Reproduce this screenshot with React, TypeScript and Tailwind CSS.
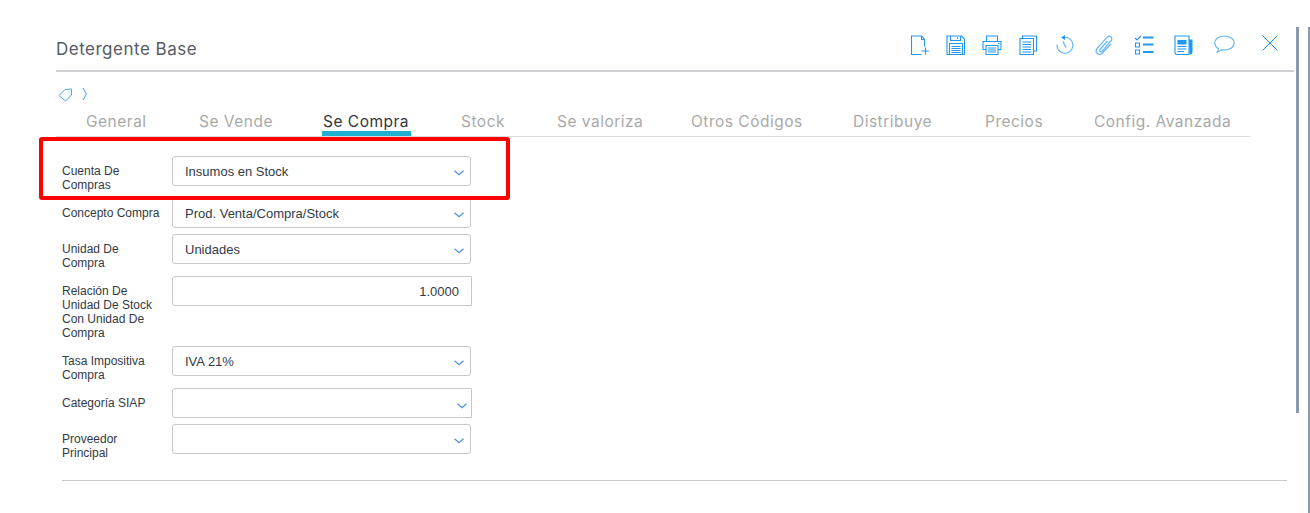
const B = "#2196f3";

function Chevron({ shift = false }: { shift?: boolean }) {
  return (
    <svg width="10" height="6" viewBox="0 0 10 6" className={shift ? "absolute right-[4px] top-[14px]" : "absolute right-[6px] top-[13px]"}>
      <path d="M0.5 0.8 L5 4.8 L9.5 0.8" fill="none" stroke="#4a90d9" strokeWidth="1.2" />
    </svg>
  );
}

function Field({ label, value, kind = "select" }: { label: string; value?: string; kind?: "select" | "input" | "wide" }) {
  return (
    <div className="flex items-start">
      <div className="w-[110px] pt-2 pr-2 text-[12px] leading-[14px] text-[#333a45]">{label}</div>
      {kind === "input" ? (
        <div className="h-[30px] w-[300px] border border-[#c8c8cc] rounded-l-[3px] px-3 text-right text-[13px] leading-[30px] text-[#333a45]">{value}</div>
      ) : (
        <div className={`relative h-[30px] border border-[#c8c8cc] text-[13px] leading-[30px] pl-3 text-[#333a45] ${kind === "wide" ? "w-[300px] rounded-l-[3px]" : "w-[299px] rounded-[3px]"}`}>
          {value}
          <Chevron shift={kind === "wide"} />
        </div>
      )}
    </div>
  );
}

const common = { width: 20, height: 20, viewBox: "0 0 20 20", fill: "none", stroke: B, strokeWidth: 1.1 };

function NewDoc() {
  return (
    <svg {...common}>
      <path d="M11.5 19.5H1.5V1H11.5L14.5 4.5V11.5" />
      <path d="M11.5 1V4.5H14.5" />
      <path d="M11.5 16H19M15.5 12.5V19.5" />
    </svg>
  );
}
function Save() {
  return (
    <svg {...common}>
      <path d="M1 1H15.5L18.5 4V19.5H1Z" />
      <path d="M4.5 1V5.5H14.5V1M11.5 2.5V4" />
      <path d="M3.5 8.5H16.5V19.5H3.5Z" />
      <path d="M5.5 11.5H14.5M5.5 13.5H14.5M5.5 15.5H14.5M5.5 17.5H14.5" />
    </svg>
  );
}
function Printer() {
  return (
    <svg {...common}>
      <path d="M4.5 6V1H15.5V6" />
      <path d="M4 14.5H1V6.5H19V14.5H16" />
      <path d="M4 10.5H16V19.5H4Z" />
      <path d="M6 13H14M6 15H14M6 17H14" />
      <path d="M16 8.5H17.5" />
    </svg>
  );
}
function Copies() {
  return (
    <svg {...common}>
      <path d="M4.5 3V1H18.5V16H15.5" />
      <path d="M2 3.5H15.5V19.5H2Z" />
      <path d="M4.5 7H13M4.5 9.5H13M4.5 12H13M4.5 14.5H13M4.5 17H13" />
    </svg>
  );
}
function History() {
  return (
    <svg {...common} stroke="#64b5f6" strokeWidth={1.2}>
      <path d="M9 2.3A8 8 0 1 1 2 9.5" />
      <path d="M8 6.5L11 12.5" />
      <path d="M10 0V5L6 2.5Z" fill={B} stroke="none" />
    </svg>
  );
}
function Clip() {
  return (
    <svg {...common} stroke="#64b5f6" strokeWidth={1.2}>
      <path d="M13.5 6L6 14.5C4.8 16 6.8 17.6 8 16.3L16.8 6C19.5 2.8 15.8 -0.5 13 2.3L3.5 12.8C-0.2 17 4.6 21.5 8.3 18L17 9" />
    </svg>
  );
}
function Checklist() {
  return (
    <svg {...common}>
      <path d="M1 3L3 5L7 1" />
      <path d="M1.5 8H5.5V12H1.5ZM1.5 15H5.5V19H1.5Z" />
      <path d="M9 1.5H19.5V3.5H9ZM9 8.5H19.5V10.5H9ZM9 16H19.5V18H9Z" fill={B} stroke="none" />
    </svg>
  );
}
function News() {
  return (
    <svg {...common}>
      <path d="M15 4.5H18.5V17C18.5 18.5 17.5 19.5 15.5 19.5Z" fill={B} stroke="none" />
      <path d="M1 1H15V19.5H3C1.8 19.5 1 18.7 1 17.5Z" />
      <path d="M3.5 5H12.5V9.5H3.5Z" fill={B} stroke="none" />
      <path d="M3.5 11.5H12.5M3.5 14H12.5M3.5 16.5H10" />
    </svg>
  );
}
function Bubble() {
  return (
    <svg {...common} stroke="#64b5f6" strokeWidth={1.2} width={21} viewBox="0 0 21 20">
      <path d="M10.5 1C5 1 0.8 4 0.8 8C0.8 10.3 2.2 12.3 4.4 13.6C4.4 15 4 16.2 3.2 17C5 16.7 6.7 15.7 7.7 14.7C8.6 14.9 9.5 15 10.5 15C16 15 20.2 12 20.2 8C20.2 4 16 1 10.5 1Z" />
    </svg>
  );
}

function Tag() {
  return (
    <svg width="15" height="14" viewBox="0 0 15 14" fill="none" stroke="#42a5f5" strokeWidth="1">
      <path d="M1 7.5L7 1.5L13.5 1L13.5 7L7.5 13Z" />
      <path d="M10.5 4H11.5" />
    </svg>
  );
}

const tabs = [
  { t: "General", w: "w-[113px]" },
  { t: "Se Vende", w: "w-[124px]" },
  { t: "Se Compra", w: "w-[138px]" },
  { t: "Stock", w: "w-[96px]" },
  { t: "Se valoriza", w: "w-[134px]" },
  { t: "Otros Códigos", w: "w-[162px]" },
  { t: "Distribuye", w: "w-[132px]" },
  { t: "Precios", w: "w-[109px]" },
  { t: "Config. Avanzada", w: "w-[136px]" },
];

export default function App() {
  return (
    <div className="relative h-[513px] w-[1310px] overflow-hidden bg-white font-['Liberation_Sans',sans-serif]">
      <div className="pl-[56px] pt-[31px]">
        <div className="flex h-[41px] w-[1238px] items-start justify-between border-b-2 border-[#d0d0d4]">
          <div className="pt-[7px] font-['Inter',sans-serif] text-[17px] leading-[22px] tracking-[0.5px] text-[#555b66]">Detergente Base</div>
          <div className="flex items-start pt-[4px] pr-[15px]">
            <NewDoc />
            <div className="ml-[16px]"><Save /></div>
            <div className="ml-[16px]"><Printer /></div>
            <div className="ml-[16px]"><Copies /></div>
            <div className="ml-[17px]"><History /></div>
            <div className="ml-[19px]"><Clip /></div>
            <div className="ml-[20px]"><Checklist /></div>
            <div className="ml-[20px]"><News /></div>
            <div className="ml-[20px]"><Bubble /></div>
            <svg width="18" height="18" viewBox="0 0 18 18" fill="none" stroke="#2196f3" strokeWidth="1" className="ml-[26px] -mt-[1px]">
              <path d="M1.5 1.5L16.5 16.5M16.5 1.5L1.5 16.5" />
            </svg>
          </div>
        </div>
        <div className="mt-[15px] flex h-[16px] items-center gap-[9px] pl-[2px]">
          <Tag />
          <svg width="6" height="14" viewBox="0 0 6 14" fill="none" stroke="#42a5f5" strokeWidth="1" className="-mt-[2px]"><path d="M1 1L4.5 7L1 13" /></svg>
        </div>
        <div className="flex h-[34px] w-[1194px] items-start border-b border-[#dcdcdc] pl-[30px] pt-[8px] font-['Inter',sans-serif] text-[15.5px] leading-[22px] tracking-[0.5px]">
          {tabs.map(({ t, w }) => (
            <div key={t} className={`${w} shrink-0 whitespace-nowrap`}>
              <span className={t === "Se Compra" ? "relative inline-block text-[#33373d]" : "inline-block text-[#a9a9a9]"}>
                {t}
                {t === "Se Compra" && <span className="absolute -left-[1px] -right-[2px] top-[20px] h-[5px] bg-[#1fb0d2]" />}
              </span>
            </div>
          ))}
        </div>
        <div className="flex flex-col gap-[6px] pl-[6px] pt-[19px]">
          <Field label="Cuenta De Compras" value="Insumos en Stock" />
          <Field label="Concepto Compra" value="Prod. Venta/Compra/Stock" />
          <Field label="Unidad De Compra" value="Unidades" />
          <Field label="Relación De Unidad De Stock Con Unidad De Compra" value="1.0000" kind="input" />
          <Field label="Tasa Impositiva Compra" value="IVA 21%" />
          <Field label="Categoría SIAP" kind="wide" />
          <Field label="Proveedor Principal" />
        </div>
        <div className="ml-[6px] mt-[20px] h-px w-[1225px] bg-[#c8c8c8]" />
      </div>
      <div className="absolute left-[39px] top-[137px] h-[63px] w-[471px] rounded-[3px] border-4 border-[#ff0000]" />
      <div className="absolute left-[1296px] top-[27px] h-[386px] w-[3px] bg-[#8a99ad]" />
      <div className="absolute left-[1308px] top-[27px] h-[486px] w-[2px] bg-[#8a99ad]" />
    </div>
  );
}
